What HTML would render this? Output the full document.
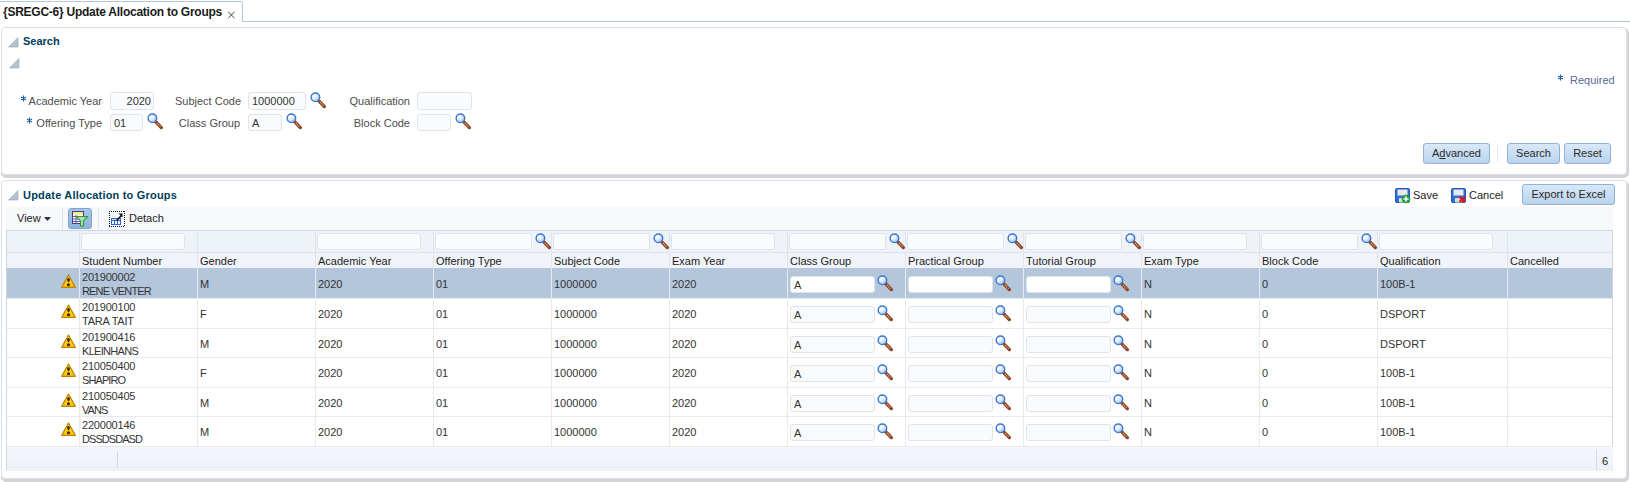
<!DOCTYPE html>
<html><head><meta charset="utf-8">
<style>
*{box-sizing:border-box;margin:0;padding:0}
html,body{width:1630px;height:482px;overflow:hidden;background:#fff;font-family:"Liberation Sans",sans-serif;font-size:11px;color:#333}
.a{position:absolute;white-space:nowrap}
.lbl{color:#4c4c4c;font-size:11px;line-height:13px}
.req{color:#2e6fa4;font-size:11px}
.inp{position:absolute;border:1px solid #dfe4ea;border-radius:3px;background:#f9fbfd;color:#333;font-size:11px;line-height:16px}
.btn{position:absolute;border:1px solid #8fb2d8;border-radius:3px;background:linear-gradient(#d8e8f8,#b9d3ee);color:#2a2a2a;font-size:11px;text-align:center}
.hdr{color:#003d5b;font-weight:bold;font-size:11px}
.mag{position:absolute;width:17px;height:17px}
.warn{position:absolute;width:16px;height:15px}
.col{position:absolute;top:0;bottom:0;width:1px;background:#e2e6eb}
</style></head>
<body>
<svg width="0" height="0" style="position:absolute">
<defs>
<radialGradient id="mgg" cx="0.35" cy="0.3" r="0.8"><stop offset="0" stop-color="#ffffff"/><stop offset="0.5" stop-color="#d8e8fb"/><stop offset="1" stop-color="#7eaee8"/></radialGradient>
<linearGradient id="wg" x1="0" y1="0" x2="0" y2="1"><stop offset="0" stop-color="#fff07a"/><stop offset="0.5" stop-color="#ffd21a"/><stop offset="1" stop-color="#ffbe00"/></linearGradient>
<symbol id="mag" viewBox="0 0 16 16">
<line x1="8.3" y1="8.3" x2="13.5" y2="13.7" stroke="#8d4322" stroke-width="3.2" stroke-linecap="round"/>
<line x1="9.3" y1="9.4" x2="13" y2="13.2" stroke="#e2b596" stroke-width="1" stroke-dasharray="1.1 0.8"/>
<circle cx="5.1" cy="5" r="4.05" fill="url(#mgg)" stroke="#3b77cf" stroke-width="1.3"/>
</symbol>
<symbol id="warn" viewBox="0 0 16 15">
<path d="M7.5 1.1 L14.3 13.3 H0.7 Z" fill="url(#wg)" stroke="#c08300" stroke-width="1.25" stroke-linejoin="round"/>
<path d="M6.1 5.7 Q6.1 4.1 7.5 4.1 Q8.9 4.1 8.9 5.7 Q8.8 7 7.5 8.6 Q6.2 7 6.1 5.7Z" fill="#3a2800"/>
<circle cx="7.5" cy="10.8" r="1.55" fill="#3a2800"/>
</symbol>
</defs></svg>
<!-- tab bar -->
<div class="a" style="left:0;top:1px;width:243px;height:21px;border-top:1px solid #b8c6d6;border-right:1px solid #b8c6d6;border-top-right-radius:2px;background:#fff"></div>
<div class="a" style="left:242px;top:21px;width:1388px;height:1px;background:#b8c6d6"></div>
<div class="a" style="left:3px;top:5px;font-weight:bold;font-size:12px;color:#1a1a1a;letter-spacing:-0.25px">{SREGC-6} Update Allocation to Groups</div>
<svg class="a" style="left:227px;top:11px" width="9" height="9" viewBox="0 0 9 9"><path d="M1.2 0.8L7.6 7.2M7.6 0.8L1.2 7.2" stroke="#333" stroke-width="0.9"/></svg>

<!-- search panel -->
<div class="a" style="left:1px;top:27px;width:1626px;height:148px;border:1px solid #d9e0e8;border-radius:4px;background:#fff;box-shadow:1px 2px 0 1px #d2d4d8"></div>
<svg class="a" style="left:8px;top:37px" width="11" height="11" viewBox="0 0 11 11"><path d="M10 0.5V10H0.5Z" fill="#b4c2d0" stroke="#8fa6bd" stroke-width="0.6"/></svg>
<div class="a hdr" style="left:23px;top:35px">Search</div>
<svg class="a" style="left:9px;top:58px" width="11" height="11" viewBox="0 0 11 11"><path d="M10 0.5V10H0.5Z" fill="#b4c2d0" stroke="#8fa6bd" stroke-width="0.6"/></svg>

<svg class="a" style="left:1557px;top:74px" width="7" height="7" viewBox="0 0 7 7"><path d="M3.5 0.6V6.4M1 2.1L6 4.9M1 4.9L6 2.1" stroke="#1f62a0" stroke-width="1.1"/></svg>
<div class="a" style="left:1570px;top:74px;color:#59689a;font-size:11px">Required</div>

<!-- form -->
<svg class="a" style="left:20px;top:95px" width="7" height="7" viewBox="0 0 7 7"><path d="M3.5 0.6V6.4M1 2.1L6 4.9M1 4.9L6 2.1" stroke="#1f62a0" stroke-width="1.1"/></svg>
<div class="a lbl" style="left:2px;top:95px;width:100px;text-align:right">Academic Year</div>
<div class="inp" style="left:110px;top:92px;width:44px;height:18px;text-align:right;padding-right:2px;line-height:17px">2020</div>
<div class="a lbl" style="left:141px;top:95px;width:100px;text-align:right">Subject Code</div>
<div class="inp" style="left:248px;top:92px;width:58px;height:18px;padding-left:3px;line-height:17px">1000000</div>
<div class="a lbl" style="left:310px;top:95px;width:100px;text-align:right">Qualification</div>
<div class="inp" style="left:417px;top:92px;width:55px;height:18px"></div>

<svg class="a" style="left:26px;top:117px" width="7" height="7" viewBox="0 0 7 7"><path d="M3.5 0.6V6.4M1 2.1L6 4.9M1 4.9L6 2.1" stroke="#1f62a0" stroke-width="1.1"/></svg>
<div class="a lbl" style="left:2px;top:117px;width:100px;text-align:right">Offering Type</div>
<div class="inp" style="left:110px;top:114px;width:33px;height:17px;padding-left:3px">01</div>
<div class="a lbl" style="left:140px;top:117px;width:100px;text-align:right">Class Group</div>
<div class="inp" style="left:248px;top:114px;width:34px;height:17px;padding-left:3px">A</div>
<div class="a lbl" style="left:310px;top:117px;width:100px;text-align:right">Block Code</div>
<div class="inp" style="left:417px;top:114px;width:34px;height:17px"></div>
<svg class="mag" style="left:147px;top:113px" width="16" height="16"><use href="#mag"/></svg><svg class="mag" style="left:310px;top:92px" width="16" height="16"><use href="#mag"/></svg><svg class="mag" style="left:286px;top:113px" width="16" height="16"><use href="#mag"/></svg><svg class="mag" style="left:455px;top:113px" width="16" height="16"><use href="#mag"/></svg>

<div class="btn" style="left:1423px;top:143px;width:67px;height:21px;line-height:19px">A<u>d</u>vanced</div>
<div class="a" style="left:1497px;top:145px;width:1px;height:17px;background:#e3e7ec"></div>
<div class="btn" style="left:1507px;top:143px;width:53px;height:21px;line-height:19px">Search</div>
<div class="btn" style="left:1564px;top:143px;width:47px;height:21px;line-height:19px">Reset</div>

<!-- results panel -->
<div class="a" style="left:1px;top:180px;width:1626px;height:299px;border:1px solid #d9e0e8;border-radius:4px;background:#fff;box-shadow:1px 2px 0 1px #d2d4d8"></div>
<svg class="a" style="left:8px;top:190px" width="11" height="11" viewBox="0 0 11 11"><path d="M10 0.5V10H0.5Z" fill="#b4c2d0" stroke="#8fa6bd" stroke-width="0.6"/></svg>
<div class="a hdr" style="left:23px;top:189px;letter-spacing:0.2px">Update Allocation to Groups</div>

<svg class="a" style="left:1395px;top:188px" width="16" height="16" viewBox="0 0 16 16">
<rect x="0.5" y="0.5" width="14" height="14" rx="1.5" fill="#2f6fd8" stroke="#1f55b8"/>
<rect x="2.5" y="1.5" width="10" height="6" fill="#e9e9e9"/>
<rect x="4" y="10" width="7" height="4.5" fill="#d8d8d8"/>
<circle cx="11" cy="11" r="4.3" fill="#22a340"/>
<path d="M11 8.5V13.5M8.5 11H13.5" stroke="#fff" stroke-width="1.6"/>
</svg>
<div class="a" style="left:1413px;top:189px;color:#222">Save</div>
<svg class="a" style="left:1451px;top:188px" width="16" height="16" viewBox="0 0 16 16">
<rect x="0.5" y="0.5" width="14" height="14" rx="1.5" fill="#2f6fd8" stroke="#1f55b8"/>
<rect x="2.5" y="1.5" width="10" height="6" fill="#e9e9e9"/>
<rect x="4" y="10" width="7" height="4.5" fill="#d8d8d8"/>
<path d="M8.5 8.8L14 14M14 8.8L8.5 14" stroke="#e01818" stroke-width="2.4"/>
</svg>
<div class="a" style="left:1469px;top:189px;color:#222">Cancel</div>

<div class="btn" style="left:1522px;top:184px;width:93px;height:21px;line-height:19px">Export to Excel</div>

<!-- toolbar -->
<div class="a" style="left:6px;top:207px;width:1607px;height:23px;background:#f6f8fb"></div>
<div class="a" style="left:17px;top:212px;color:#222">View</div>
<svg class="a" style="left:44px;top:217px" width="7" height="4" viewBox="0 0 7 4"><path d="M0 0H7L3.5 4Z" fill="#333"/></svg>
<div class="a" style="left:62px;top:208px;width:1px;height:21px;background:#dfe4ea"></div>
<div class="a" style="left:68px;top:208px;width:24px;height:21px;border:1px solid #7ea4cf;border-radius:3px;background:linear-gradient(#a9c6e6,#8cb2dc)"></div>
<svg class="a" style="left:71px;top:211px" width="18" height="16" viewBox="0 0 18 16">
<rect x="1.5" y="0.5" width="11" height="12" fill="#fff" stroke="#4b3d8c"/>
<rect x="2" y="1" width="10" height="2.6" fill="#f6ec7a"/>
<path d="M2 5.5H12M2 8H12M2 10.5H12M5 4V12.5" stroke="#4b3d8c" stroke-width="0.8"/>
<path d="M5.5 5.5H16.5L12.5 10V15H9.5V10Z" fill="#a8e0b0" stroke="#2a9a3a" stroke-width="1.1"/>
</svg>
<div class="a" style="left:98px;top:208px;width:1px;height:20px;background:#dfe4ea"></div>
<svg class="a" style="left:109px;top:211px" width="16" height="16" viewBox="0 0 16 16" shape-rendering="crispEdges">
<path d="M0 0h16v16h-16z" fill="none"/>
<g fill="#111"><rect x="0" y="0" width="1" height="1"/><rect x="0" y="15" width="1" height="1"/><rect x="0" y="0" width="1" height="1"/><rect x="15" y="0" width="1" height="1"/><rect x="2" y="0" width="1" height="1"/><rect x="2" y="15" width="1" height="1"/><rect x="0" y="2" width="1" height="1"/><rect x="15" y="2" width="1" height="1"/><rect x="4" y="0" width="1" height="1"/><rect x="4" y="15" width="1" height="1"/><rect x="0" y="4" width="1" height="1"/><rect x="15" y="4" width="1" height="1"/><rect x="6" y="0" width="1" height="1"/><rect x="6" y="15" width="1" height="1"/><rect x="0" y="6" width="1" height="1"/><rect x="15" y="6" width="1" height="1"/><rect x="8" y="0" width="1" height="1"/><rect x="8" y="15" width="1" height="1"/><rect x="0" y="8" width="1" height="1"/><rect x="15" y="8" width="1" height="1"/><rect x="10" y="0" width="1" height="1"/><rect x="10" y="15" width="1" height="1"/><rect x="0" y="10" width="1" height="1"/><rect x="15" y="10" width="1" height="1"/><rect x="12" y="0" width="1" height="1"/><rect x="12" y="15" width="1" height="1"/><rect x="0" y="12" width="1" height="1"/><rect x="15" y="12" width="1" height="1"/><rect x="14" y="0" width="1" height="1"/><rect x="14" y="15" width="1" height="1"/><rect x="0" y="14" width="1" height="1"/><rect x="15" y="14" width="1" height="1"/></g>
<rect x="2" y="7" width="10" height="7" fill="#2f66d4"/>
<rect x="3" y="8" width="8" height="1" fill="#cfe0ff"/>
<rect x="3" y="10" width="2" height="3" fill="#eef5ff"/><rect x="6" y="10" width="2" height="3" fill="#eef5ff"/><rect x="9" y="10" width="2" height="3" fill="#eef5ff"/>
</svg><svg class="a" style="left:109px;top:211px" width="16" height="16" viewBox="0 0 16 16">
<path d="M7.5 9.5L12.5 4.5" stroke="#111" stroke-width="1.6"/>
<path d="M9.5 2.5H13.5V6.5Z" fill="#111"/>
</svg>
<div class="a" style="left:129px;top:212px;color:#222">Detach</div>

<div class="a" style="left:6px;top:230px;width:1607px;height:240px;border:1px solid #cfd6df;border-bottom:none;background:#fff"></div>
<div class="a" style="left:7px;top:231px;width:1605px;height:21px;background:#eef2f9"></div>
<div class="a" style="left:7px;top:252px;width:1605px;height:1px;background:#dde3eb"></div>
<div class="a" style="left:7px;top:253px;width:1605px;height:15px;background:#f0f4fa"></div>
<div class="a" style="left:7px;top:268px;width:1605px;height:30px;background:#b3c6dc"></div>
<div class="a" style="left:7px;top:298px;width:1605px;height:1px;background:#e6e9ed"></div>
<div class="a" style="left:7px;top:328px;width:1605px;height:1px;background:#e6e9ed"></div>
<div class="a" style="left:7px;top:357px;width:1605px;height:1px;background:#e6e9ed"></div>
<div class="a" style="left:7px;top:387px;width:1605px;height:1px;background:#e6e9ed"></div>
<div class="a" style="left:7px;top:416px;width:1605px;height:1px;background:#e6e9ed"></div>
<div class="a" style="left:7px;top:446px;width:1605px;height:1px;background:#e6e9ed"></div>
<div class="a" style="left:79px;top:231px;width:1px;height:37px;background:#dfe4ea"></div>
<div class="a" style="left:79px;top:268px;width:1px;height:178px;background:#e8ebee"></div>
<div class="a" style="left:197px;top:231px;width:1px;height:37px;background:#dfe4ea"></div>
<div class="a" style="left:197px;top:268px;width:1px;height:178px;background:#e8ebee"></div>
<div class="a" style="left:315px;top:231px;width:1px;height:37px;background:#dfe4ea"></div>
<div class="a" style="left:315px;top:268px;width:1px;height:178px;background:#e8ebee"></div>
<div class="a" style="left:433px;top:231px;width:1px;height:37px;background:#dfe4ea"></div>
<div class="a" style="left:433px;top:268px;width:1px;height:178px;background:#e8ebee"></div>
<div class="a" style="left:551px;top:231px;width:1px;height:37px;background:#dfe4ea"></div>
<div class="a" style="left:551px;top:268px;width:1px;height:178px;background:#e8ebee"></div>
<div class="a" style="left:669px;top:231px;width:1px;height:37px;background:#dfe4ea"></div>
<div class="a" style="left:669px;top:268px;width:1px;height:178px;background:#e8ebee"></div>
<div class="a" style="left:787px;top:231px;width:1px;height:37px;background:#dfe4ea"></div>
<div class="a" style="left:787px;top:268px;width:1px;height:178px;background:#e8ebee"></div>
<div class="a" style="left:905px;top:231px;width:1px;height:37px;background:#dfe4ea"></div>
<div class="a" style="left:905px;top:268px;width:1px;height:178px;background:#e8ebee"></div>
<div class="a" style="left:1023px;top:231px;width:1px;height:37px;background:#dfe4ea"></div>
<div class="a" style="left:1023px;top:268px;width:1px;height:178px;background:#e8ebee"></div>
<div class="a" style="left:1141px;top:231px;width:1px;height:37px;background:#dfe4ea"></div>
<div class="a" style="left:1141px;top:268px;width:1px;height:178px;background:#e8ebee"></div>
<div class="a" style="left:1259px;top:231px;width:1px;height:37px;background:#dfe4ea"></div>
<div class="a" style="left:1259px;top:268px;width:1px;height:178px;background:#e8ebee"></div>
<div class="a" style="left:1377px;top:231px;width:1px;height:37px;background:#dfe4ea"></div>
<div class="a" style="left:1377px;top:268px;width:1px;height:178px;background:#e8ebee"></div>
<div class="a" style="left:1507px;top:231px;width:1px;height:37px;background:#dfe4ea"></div>
<div class="a" style="left:1507px;top:268px;width:1px;height:178px;background:#e8ebee"></div>
<div class="inp" style="left:81px;top:233px;width:104px;height:17px"></div>
<div class="inp" style="left:317px;top:233px;width:104px;height:17px"></div>
<div class="inp" style="left:435px;top:233px;width:97px;height:17px"></div>
<svg class="mag" style="left:535px;top:233px" width="16" height="16"><use href="#mag"/></svg>
<div class="inp" style="left:553px;top:233px;width:97px;height:17px"></div>
<svg class="mag" style="left:653px;top:233px" width="16" height="16"><use href="#mag"/></svg>
<div class="inp" style="left:671px;top:233px;width:104px;height:17px"></div>
<div class="inp" style="left:789px;top:233px;width:97px;height:17px"></div>
<svg class="mag" style="left:889px;top:233px" width="16" height="16"><use href="#mag"/></svg>
<div class="inp" style="left:907px;top:233px;width:97px;height:17px"></div>
<svg class="mag" style="left:1007px;top:233px" width="16" height="16"><use href="#mag"/></svg>
<div class="inp" style="left:1025px;top:233px;width:97px;height:17px"></div>
<svg class="mag" style="left:1125px;top:233px" width="16" height="16"><use href="#mag"/></svg>
<div class="inp" style="left:1143px;top:233px;width:104px;height:17px"></div>
<div class="inp" style="left:1261px;top:233px;width:97px;height:17px"></div>
<svg class="mag" style="left:1361px;top:233px" width="16" height="16"><use href="#mag"/></svg>
<div class="inp" style="left:1379px;top:233px;width:114px;height:17px"></div>
<div class="a" style="left:82px;top:255px;color:#222;line-height:13px">Student Number</div>
<div class="a" style="left:200px;top:255px;color:#222;line-height:13px">Gender</div>
<div class="a" style="left:318px;top:255px;color:#222;line-height:13px">Academic Year</div>
<div class="a" style="left:436px;top:255px;color:#222;line-height:13px">Offering Type</div>
<div class="a" style="left:554px;top:255px;color:#222;line-height:13px">Subject Code</div>
<div class="a" style="left:672px;top:255px;color:#222;line-height:13px">Exam Year</div>
<div class="a" style="left:790px;top:255px;color:#222;line-height:13px">Class Group</div>
<div class="a" style="left:908px;top:255px;color:#222;line-height:13px">Practical Group</div>
<div class="a" style="left:1026px;top:255px;color:#222;line-height:13px">Tutorial Group</div>
<div class="a" style="left:1144px;top:255px;color:#222;line-height:13px">Exam Type</div>
<div class="a" style="left:1262px;top:255px;color:#222;line-height:13px">Block Code</div>
<div class="a" style="left:1380px;top:255px;color:#222;line-height:13px">Qualification</div>
<div class="a" style="left:1510px;top:255px;color:#222;line-height:13px">Cancelled</div>
<svg class="warn" style="left:61px;top:274px" width="16" height="15"><use href="#warn"/></svg>
<div class="a" style="left:82px;top:270px;line-height:14px;color:#333;letter-spacing:-0.2px">201900002<br><span style="letter-spacing:-0.85px">RENE VENTER</span></div>
<div class="a" style="left:200px;top:278px;line-height:13px;color:#333">M</div>
<div class="a" style="left:318px;top:278px;line-height:13px;color:#333">2020</div>
<div class="a" style="left:436px;top:278px;line-height:13px;color:#333">01</div>
<div class="a" style="left:554px;top:278px;line-height:13px;color:#333">1000000</div>
<div class="a" style="left:672px;top:278px;line-height:13px;color:#333">2020</div>
<div class="a" style="left:1144px;top:278px;line-height:13px;color:#333">N</div>
<div class="a" style="left:1262px;top:278px;line-height:13px;color:#333">0</div>
<div class="a" style="left:1380px;top:278px;line-height:13px;color:#333">100B-1</div>
<div class="inp" style="left:790px;top:276px;width:85px;height:17px;padding-left:3px;background:#fff">A</div>
<svg class="mag" style="left:877px;top:275px" width="16" height="16"><use href="#mag"/></svg>
<div class="inp" style="left:908px;top:276px;width:85px;height:17px;padding-left:3px;background:#fff"></div>
<svg class="mag" style="left:995px;top:275px" width="16" height="16"><use href="#mag"/></svg>
<div class="inp" style="left:1026px;top:276px;width:85px;height:17px;padding-left:3px;background:#fff"></div>
<svg class="mag" style="left:1113px;top:275px" width="16" height="16"><use href="#mag"/></svg>
<svg class="warn" style="left:61px;top:304px" width="16" height="15"><use href="#warn"/></svg>
<div class="a" style="left:82px;top:300px;line-height:14px;color:#333;letter-spacing:-0.2px">201900100<br><span style="letter-spacing:-0.22px">TARA TAIT</span></div>
<div class="a" style="left:200px;top:308px;line-height:13px;color:#333">F</div>
<div class="a" style="left:318px;top:308px;line-height:13px;color:#333">2020</div>
<div class="a" style="left:436px;top:308px;line-height:13px;color:#333">01</div>
<div class="a" style="left:554px;top:308px;line-height:13px;color:#333">1000000</div>
<div class="a" style="left:672px;top:308px;line-height:13px;color:#333">2020</div>
<div class="a" style="left:1144px;top:308px;line-height:13px;color:#333">N</div>
<div class="a" style="left:1262px;top:308px;line-height:13px;color:#333">0</div>
<div class="a" style="left:1380px;top:308px;line-height:13px;color:#333">DSPORT</div>
<div class="inp" style="left:790px;top:306px;width:85px;height:17px;padding-left:3px;background:#f8fafc">A</div>
<svg class="mag" style="left:877px;top:305px" width="16" height="16"><use href="#mag"/></svg>
<div class="inp" style="left:908px;top:306px;width:85px;height:17px;padding-left:3px;background:#f8fafc"></div>
<svg class="mag" style="left:995px;top:305px" width="16" height="16"><use href="#mag"/></svg>
<div class="inp" style="left:1026px;top:306px;width:85px;height:17px;padding-left:3px;background:#f8fafc"></div>
<svg class="mag" style="left:1113px;top:305px" width="16" height="16"><use href="#mag"/></svg>
<svg class="warn" style="left:61px;top:334px" width="16" height="15"><use href="#warn"/></svg>
<div class="a" style="left:82px;top:330px;line-height:14px;color:#333;letter-spacing:-0.2px">201900416<br><span style="letter-spacing:-0.7px">KLEINHANS</span></div>
<div class="a" style="left:200px;top:338px;line-height:13px;color:#333">M</div>
<div class="a" style="left:318px;top:338px;line-height:13px;color:#333">2020</div>
<div class="a" style="left:436px;top:338px;line-height:13px;color:#333">01</div>
<div class="a" style="left:554px;top:338px;line-height:13px;color:#333">1000000</div>
<div class="a" style="left:672px;top:338px;line-height:13px;color:#333">2020</div>
<div class="a" style="left:1144px;top:338px;line-height:13px;color:#333">N</div>
<div class="a" style="left:1262px;top:338px;line-height:13px;color:#333">0</div>
<div class="a" style="left:1380px;top:338px;line-height:13px;color:#333">DSPORT</div>
<div class="inp" style="left:790px;top:336px;width:85px;height:17px;padding-left:3px;background:#f8fafc">A</div>
<svg class="mag" style="left:877px;top:335px" width="16" height="16"><use href="#mag"/></svg>
<div class="inp" style="left:908px;top:336px;width:85px;height:17px;padding-left:3px;background:#f8fafc"></div>
<svg class="mag" style="left:995px;top:335px" width="16" height="16"><use href="#mag"/></svg>
<div class="inp" style="left:1026px;top:336px;width:85px;height:17px;padding-left:3px;background:#f8fafc"></div>
<svg class="mag" style="left:1113px;top:335px" width="16" height="16"><use href="#mag"/></svg>
<svg class="warn" style="left:61px;top:363px" width="16" height="15"><use href="#warn"/></svg>
<div class="a" style="left:82px;top:359px;line-height:14px;color:#333;letter-spacing:-0.2px">210050400<br><span style="letter-spacing:-0.9px">SHAPIRO</span></div>
<div class="a" style="left:200px;top:367px;line-height:13px;color:#333">F</div>
<div class="a" style="left:318px;top:367px;line-height:13px;color:#333">2020</div>
<div class="a" style="left:436px;top:367px;line-height:13px;color:#333">01</div>
<div class="a" style="left:554px;top:367px;line-height:13px;color:#333">1000000</div>
<div class="a" style="left:672px;top:367px;line-height:13px;color:#333">2020</div>
<div class="a" style="left:1144px;top:367px;line-height:13px;color:#333">N</div>
<div class="a" style="left:1262px;top:367px;line-height:13px;color:#333">0</div>
<div class="a" style="left:1380px;top:367px;line-height:13px;color:#333">100B-1</div>
<div class="inp" style="left:790px;top:365px;width:85px;height:17px;padding-left:3px;background:#f8fafc">A</div>
<svg class="mag" style="left:877px;top:364px" width="16" height="16"><use href="#mag"/></svg>
<div class="inp" style="left:908px;top:365px;width:85px;height:17px;padding-left:3px;background:#f8fafc"></div>
<svg class="mag" style="left:995px;top:364px" width="16" height="16"><use href="#mag"/></svg>
<div class="inp" style="left:1026px;top:365px;width:85px;height:17px;padding-left:3px;background:#f8fafc"></div>
<svg class="mag" style="left:1113px;top:364px" width="16" height="16"><use href="#mag"/></svg>
<svg class="warn" style="left:61px;top:393px" width="16" height="15"><use href="#warn"/></svg>
<div class="a" style="left:82px;top:389px;line-height:14px;color:#333;letter-spacing:-0.2px">210050405<br><span style="letter-spacing:-0.95px">VANS</span></div>
<div class="a" style="left:200px;top:397px;line-height:13px;color:#333">M</div>
<div class="a" style="left:318px;top:397px;line-height:13px;color:#333">2020</div>
<div class="a" style="left:436px;top:397px;line-height:13px;color:#333">01</div>
<div class="a" style="left:554px;top:397px;line-height:13px;color:#333">1000000</div>
<div class="a" style="left:672px;top:397px;line-height:13px;color:#333">2020</div>
<div class="a" style="left:1144px;top:397px;line-height:13px;color:#333">N</div>
<div class="a" style="left:1262px;top:397px;line-height:13px;color:#333">0</div>
<div class="a" style="left:1380px;top:397px;line-height:13px;color:#333">100B-1</div>
<div class="inp" style="left:790px;top:395px;width:85px;height:17px;padding-left:3px;background:#f8fafc">A</div>
<svg class="mag" style="left:877px;top:394px" width="16" height="16"><use href="#mag"/></svg>
<div class="inp" style="left:908px;top:395px;width:85px;height:17px;padding-left:3px;background:#f8fafc"></div>
<svg class="mag" style="left:995px;top:394px" width="16" height="16"><use href="#mag"/></svg>
<div class="inp" style="left:1026px;top:395px;width:85px;height:17px;padding-left:3px;background:#f8fafc"></div>
<svg class="mag" style="left:1113px;top:394px" width="16" height="16"><use href="#mag"/></svg>
<svg class="warn" style="left:61px;top:422px" width="16" height="15"><use href="#warn"/></svg>
<div class="a" style="left:82px;top:418px;line-height:14px;color:#333;letter-spacing:-0.2px">220000146<br><span style="letter-spacing:-0.95px">DSSDSDASD</span></div>
<div class="a" style="left:200px;top:426px;line-height:13px;color:#333">M</div>
<div class="a" style="left:318px;top:426px;line-height:13px;color:#333">2020</div>
<div class="a" style="left:436px;top:426px;line-height:13px;color:#333">01</div>
<div class="a" style="left:554px;top:426px;line-height:13px;color:#333">1000000</div>
<div class="a" style="left:672px;top:426px;line-height:13px;color:#333">2020</div>
<div class="a" style="left:1144px;top:426px;line-height:13px;color:#333">N</div>
<div class="a" style="left:1262px;top:426px;line-height:13px;color:#333">0</div>
<div class="a" style="left:1380px;top:426px;line-height:13px;color:#333">100B-1</div>
<div class="inp" style="left:790px;top:424px;width:85px;height:17px;padding-left:3px;background:#f8fafc">A</div>
<svg class="mag" style="left:877px;top:423px" width="16" height="16"><use href="#mag"/></svg>
<div class="inp" style="left:908px;top:424px;width:85px;height:17px;padding-left:3px;background:#f8fafc"></div>
<svg class="mag" style="left:995px;top:423px" width="16" height="16"><use href="#mag"/></svg>
<div class="inp" style="left:1026px;top:424px;width:85px;height:17px;padding-left:3px;background:#f8fafc"></div>
<svg class="mag" style="left:1113px;top:423px" width="16" height="16"><use href="#mag"/></svg>
<div class="a" style="left:7px;top:447px;width:1606px;height:24px;background:linear-gradient(#f5f7fb,#edf1f8)"></div>
<div class="a" style="left:117px;top:451px;width:1px;height:17px;background:#d5dbe3"></div>
<div class="a" style="left:1596px;top:450px;width:1px;height:20px;background:#d5dbe3"></div>
<div class="a" style="left:1602px;top:455px;color:#222;line-height:13px">6</div>
</body></html>
